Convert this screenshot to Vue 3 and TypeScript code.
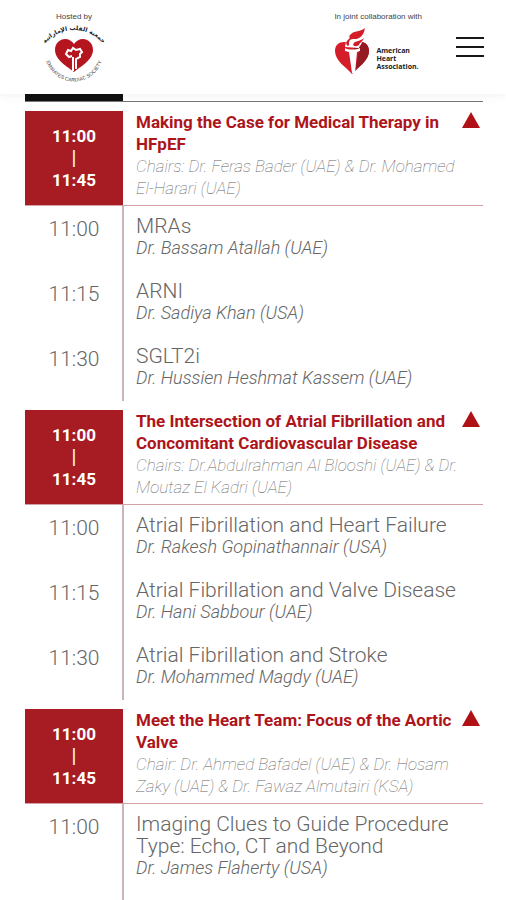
<script setup lang="ts">
import { ref } from 'vue'

interface Talk {
  time: string
  topic: string
  speaker: string
}

interface Session {
  start: string
  end: string
  title: string
  chairs: string
  talks: Talk[]
  open: boolean
}

const menuOpen = ref(false)

const sessions = ref<Session[]>([
  {
    start: '11:00',
    end: '11:45',
    title: 'Making the Case for Medical Therapy in HFpEF',
    chairs: 'Chairs: Dr. Feras Bader (UAE) & Dr. Mohamed El-Harari (UAE)',
    open: true,
    talks: [
      { time: '11:00', topic: 'MRAs', speaker: 'Dr. Bassam Atallah (UAE)' },
      { time: '11:15', topic: 'ARNI', speaker: 'Dr. Sadiya Khan (USA)' },
      { time: '11:30', topic: 'SGLT2i', speaker: 'Dr. Hussien Heshmat Kassem (UAE)' },
    ],
  },
  {
    start: '11:00',
    end: '11:45',
    title: 'The Intersection of Atrial Fibrillation and Concomitant Cardiovascular Disease',
    chairs: 'Chairs: Dr.Abdulrahman Al Blooshi (UAE) & Dr. Moutaz El Kadri (UAE)',
    open: true,
    talks: [
      { time: '11:00', topic: 'Atrial Fibrillation and Heart Failure', speaker: 'Dr. Rakesh Gopinathannair (USA)' },
      { time: '11:15', topic: 'Atrial Fibrillation and Valve Disease', speaker: 'Dr. Hani Sabbour (UAE)' },
      { time: '11:30', topic: 'Atrial Fibrillation and Stroke', speaker: 'Dr. Mohammed Magdy (UAE)' },
    ],
  },
  {
    start: '11:00',
    end: '11:45',
    title: 'Meet the Heart Team: Focus of the Aortic Valve',
    chairs: 'Chair: Dr. Ahmed Bafadel (UAE) & Dr. Hosam Zaky (UAE) & Dr. Fawaz Almutairi (KSA)',
    open: true,
    talks: [
      { time: '11:00', topic: 'Imaging Clues to Guide Procedure Type: Echo, CT and Beyond', speaker: 'Dr. James Flaherty (USA)' },
    ],
  },
])
</script>

<template>
  <div class="page">
    <header class="top">
      <div class="host">
        <span class="caption">Hosted by</span>
        <svg class="society" viewBox="0 0 64 62" role="img" aria-label="Emirates Cardiac Society">
          <defs>
            <path id="arc-top" d="M-2 29 A38 38 0 0 1 66 29" />
            <path id="arc-bottom" d="M4 38 A29 29 0 0 0 60 38" />
          </defs>
          <text class="arabic"><textPath href="#arc-top" startOffset="50%">جمعية القلب الإماراتية</textPath></text>
          <path
            fill="#b5151f"
            d="M32 50C26 45 13 38 13 28C13 21 18 17 23 17C27 17 30 19 32 22C34 19 37 17 41 17C46 17 51 21 51 28C51 38 38 45 32 50Z"
          />
          <path
            fill="none"
            stroke="#fff"
            stroke-width="2"
            d="M31 49V35M34 47V37L38 35V32L40 30L38 27L34 28L31 26L29 29L26 28L24 32L27 35L30 34"
          />
          <text class="latin"><textPath href="#arc-bottom" startOffset="50%">EMIRATES CARDIAC SOCIETY</textPath></text>
        </svg>
      </div>

      <div class="partner">
        <span class="caption">In joint collaboration with</span>
        <div class="aha">
          <svg class="torch" viewBox="0 0 36 48" aria-hidden="true">
            <path
              fill="#d51d29"
              d="M18 47C12 40 1 34 1 24C1 18 5 15 10 15C13 15 15 17 18 20C21 17 23 15 27 15C32 15 35 19 35 24C35 34 24 40 18 47Z"
            />
            <path fill="#951b22" d="M20 24H25L21 44C27 38 35 32 35 24C35 19 32 15 27 15C24 15 21 18 20 20Z" />
            <path fill="#fff" d="M11 21C14 23 22 23 26 21V24L23 25L21 46H18L15 25L11 24Z" />
            <path fill="#fff" d="M11 20C12 12 15 9 20 7L28 12C29 17 25 19 25 21Z" />
            <path
              fill="#d51d29"
              d="M14 19C16 18 14 16 16 13C18 11 22 13 25 11C28 9 30 7 31 1C27 5 20 3 16 8C14 10 17 10 15 12C12 14 11 17 14 19ZM19 18C20 13 26 15 30 11C28 16 26 15 25 18C24 19 21 20 19 18Z"
            />
          </svg>
          <span class="wordmark">American<br />Heart<br />Association.</span>
        </div>
      </div>

      <button class="menu" type="button" aria-label="Menu" :aria-expanded="menuOpen" @click="menuOpen = !menuOpen">
        <svg viewBox="0 0 28 20" aria-hidden="true">
          <path stroke="#171717" stroke-width="2" d="M0 1H28M0 10H28M0 19H28" />
        </svg>
      </button>
    </header>

    <main class="agenda">
      <div class="previous"><span></span></div>
      <section v-for="(s, i) in sessions" :key="i" class="session">
        <div class="session-head">
          <div class="slot">
            <time>{{ s.start }}</time>
            <span class="to">|</span>
            <time>{{ s.end }}</time>
          </div>
          <div class="heading">
            <h2>{{ s.title }}</h2>
            <p>{{ s.chairs }}</p>
          </div>
          <button class="toggle" type="button" :aria-label="s.title" :aria-expanded="s.open" @click="s.open = !s.open">
            <svg viewBox="0 0 18 16" :class="{ closed: !s.open }" aria-hidden="true">
              <path fill="#b01116" d="M9 0L18 16H0Z" />
            </svg>
          </button>
        </div>
        <ul v-if="s.open" class="talks">
          <li v-for="t in s.talks" :key="t.time" class="talk">
            <time>{{ t.time }}</time>
            <div class="detail">
              <h3>{{ t.topic }}</h3>
              <p>{{ t.speaker }}</p>
            </div>
          </li>
        </ul>
      </section>
    </main>
  </div>
</template>

<style>
body {
  margin: 0;
  background: #fff;
}
</style>

<style scoped>
.page {
  display: flex;
  flex-direction: column;
  min-height: 100vh;
  font-family: Roboto, "Liberation Sans", sans-serif;
  color: #666;
}

h2,
h3,
p,
ul {
  margin: 0;
  padding: 0;
}

button {
  padding: 0;
  border: 0;
  background: none;
  cursor: pointer;
}

svg {
  display: block;
}

.top {
  position: sticky;
  top: 0;
  z-index: 1;
  display: flex;
  align-items: flex-start;
  box-sizing: border-box;
  height: 94px;
  padding: 11px 22px 0 42px;
  background: #fff;
  box-shadow: 0 0 10px rgba(0, 0, 0, 0.08);
}

.host {
  display: flex;
  flex-direction: column;
  align-items: center;
}

.caption {
  display: block;
  font-family: "Liberation Sans", sans-serif;
  font-size: 8px;
  line-height: 11px;
  color: #444;
}

.society {
  width: 64px;
  height: 62px;
  overflow: visible;
}

.arabic {
  font: bold 6px "DejaVu Sans", sans-serif;
  text-anchor: middle;
  fill: #222;
}

.latin {
  font: 5px "Liberation Sans", sans-serif;
  text-anchor: middle;
  fill: #444;
}

.partner {
  margin-left: auto;
}

.aha {
  display: flex;
  align-items: flex-end;
  gap: 6px;
  padding-top: 5px;
}

.torch {
  width: 36px;
  height: 48px;
}

.wordmark {
  padding-bottom: 4px;
  font: bold 7px/8px "Open Sans", sans-serif;
  color: #222;
}

.menu {
  width: 28px;
  margin: 26px 0 0 34px;
}

.agenda {
  display: flex;
  flex: 1;
  flex-direction: column;
  gap: 9px;
  padding: 0 23px 0 25px;
}

.previous {
  border-bottom: 1px solid #77777b;
}

.previous span {
  display: block;
  width: 98px;
  height: 7px;
  background: #111;
}

.session:last-child {
  display: flex;
  flex: 1;
  flex-direction: column;
}

.session:last-child .talks {
  flex: 1;
}

.session-head {
  display: flex;
  border-bottom: 1px solid #d3a0a5;
}

.slot {
  display: flex;
  flex: none;
  flex-direction: column;
  align-items: center;
  justify-content: center;
  width: 98px;
  background: #a61c22;
  color: #fff;
  font-size: 17px;
  font-weight: 700;
  line-height: 22px;
}

.to {
  font-size: 20px;
  font-weight: 400;
}

.heading {
  flex: 1;
  padding: 0 0 6px 13px;
}

.heading h2 {
  font-size: 17px;
  font-weight: 700;
  line-height: 22px;
  color: #ad151b;
}

.heading p {
  font-size: 17px;
  font-style: italic;
  font-weight: 100;
  line-height: 22px;
}

.toggle {
  align-self: flex-start;
  width: 18px;
  margin: 1px 3px 0 0;
}

.closed {
  transform: rotate(180deg);
}

.talks {
  list-style: none;
  background: linear-gradient(#c8b4ba, #c8b4ba) 97px 0 / 2px 100% no-repeat;
}

.talk {
  display: flex;
}

.talk time {
  flex: none;
  width: 98px;
  padding-top: 12px;
  font-size: 21px;
  font-weight: 300;
  line-height: 22px;
  text-align: center;
}

.detail {
  padding: 9px 0 12px 13px;
}

.detail h3 {
  font-size: 21px;
  font-weight: 300;
  line-height: 22px;
}

.detail p {
  font-size: 18px;
  font-style: italic;
  font-weight: 300;
  line-height: 22px;
}
</style>
